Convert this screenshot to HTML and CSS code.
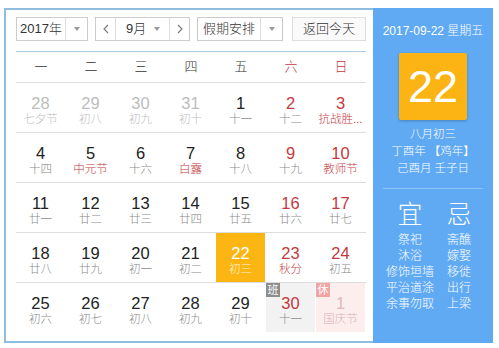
FILE: index.html
```html
<!DOCTYPE html>
<html lang="zh">
<head>
<meta charset="utf-8">
<link rel="stylesheet" href="styles.css">
</head>
<body>
<div class="cal">
  <div class="main">
    <div class="toolbar">
      <div class="sel sel-year"><span class="sel-text">2017年</span><span class="sel-arrow"><i class="tri"></i></span></div>
      <div class="sel sel-month">
        <span class="nav"><svg width="6" height="10" viewBox="0 0 6 10"><polyline points="5,1 1,5 5,9" fill="none" stroke="#777" stroke-width="1.1"/></svg></span>
        <span class="month-mid"><span class="month-text">9月</span><i class="tri"></i></span>
        <span class="nav nav-next"><svg width="6" height="10" viewBox="0 0 6 10"><polyline points="1,1 5,5 1,9" fill="none" stroke="#777" stroke-width="1.1"/></svg></span>
      </div>
      <div class="sel sel-holiday"><span class="sel-text">假期安排</span><span class="sel-arrow"><i class="tri"></i></span></div>
      <div class="btn-today">返回今天</div>
    </div>
    <div class="rule"></div>
    <div class="week">
      <span>一</span><span>二</span><span>三</span><span>四</span><span>五</span><span class="we">六</span><span class="we">日</span>
    </div>
    <div class="row">
      <div class="day other"><b>28</b><em>七夕节</em></div>
      <div class="day other"><b>29</b><em>初八</em></div>
      <div class="day other"><b>30</b><em>初九</em></div>
      <div class="day other"><b>31</b><em>初十</em></div>
      <div class="day"><b>1</b><em>十一</em></div>
      <div class="day wk"><b>2</b><em>十二</em></div>
      <div class="day wk fest"><b>3</b><em>抗战胜...</em></div>
    </div>
    <div class="row">
      <div class="day"><b>4</b><em>十四</em></div>
      <div class="day fest"><b>5</b><em>中元节</em></div>
      <div class="day"><b>6</b><em>十六</em></div>
      <div class="day fest"><b>7</b><em>白露</em></div>
      <div class="day"><b>8</b><em>十八</em></div>
      <div class="day wk"><b>9</b><em>十九</em></div>
      <div class="day wk fest"><b>10</b><em>教师节</em></div>
    </div>
    <div class="row">
      <div class="day"><b>11</b><em>廿一</em></div>
      <div class="day"><b>12</b><em>廿二</em></div>
      <div class="day"><b>13</b><em>廿三</em></div>
      <div class="day"><b>14</b><em>廿四</em></div>
      <div class="day"><b>15</b><em>廿五</em></div>
      <div class="day wk"><b>16</b><em>廿六</em></div>
      <div class="day wk"><b>17</b><em>廿七</em></div>
    </div>
    <div class="row">
      <div class="day"><b>18</b><em>廿八</em></div>
      <div class="day"><b>19</b><em>廿九</em></div>
      <div class="day"><b>20</b><em>初一</em></div>
      <div class="day"><b>21</b><em>初二</em></div>
      <div class="day today"><b>22</b><em>初三</em></div>
      <div class="day wk fest"><b>23</b><em>秋分</em></div>
      <div class="day wk"><b>24</b><em>初五</em></div>
    </div>
    <div class="row last">
      <div class="day"><b>25</b><em>初六</em></div>
      <div class="day"><b>26</b><em>初七</em></div>
      <div class="day"><b>27</b><em>初八</em></div>
      <div class="day"><b>28</b><em>初九</em></div>
      <div class="day"><b>29</b><em>初十</em></div>
      <div class="day wk work"><span class="badge badge-work">班</span><b>30</b><em>十一</em></div>
      <div class="day rest"><span class="badge badge-rest">休</span><b>1</b><em>国庆节</em></div>
    </div>
  </div>
  <div class="panel">
    <div class="p-date">2017-09-22 星期五</div>
    <div class="p-box">22</div>
    <div class="p-lines">
      <div>八月初三</div>
      <div>丁酉年 【鸡年】</div>
      <div>己酉月 壬子日</div>
    </div>
    <div class="p-rule"></div>
    <div class="yiji">
      <div class="yj-col yj-yi">
        <div class="yj-title">宜</div>
        <div>祭祀</div><div>沐浴</div><div>修饰垣墙</div><div>平治道涂</div><div>余事勿取</div>
      </div>
      <div class="yj-col yj-ji">
        <div class="yj-title">忌</div>
        <div>斋醮</div><div>嫁娶</div><div>移徙</div><div>出行</div><div>上梁</div>
      </div>
    </div>
  </div>
</div>
</body>
</html>
```
FILE: styles.css
```css
* { box-sizing: border-box; }
body {
  margin: 0;
  background: #fff;
  font-family: "Liberation Sans", "Noto Sans CJK SC", sans-serif;
  color: #333;
}
.cal {
  display: flex;
  margin: 8px 0 0 4px;
  width: 489px;
  height: 335px;
}
.main {
  width: 369px;
  border: 2px solid #8fbde0;
  border-right: none;
  padding: 7px 7px 0 10px;
}
.toolbar {
  display: flex;
  height: 24px;
}
.sel {
  display: flex;
  border: 1px solid #ccc;
  background: #fff;
  font-size: 13px;
  line-height: 22px;
  color: #333;
  font-weight: 300;
}
.sel-year { width: 72px; }
.sel-month { width: 95px; margin-left: 7px; }
.sel-holiday { width: 86px; margin-left: 7px; }
.sel-text { flex: 1; text-align: center; }
.sel-arrow {
  width: 22px;
  border-left: 1px solid #ddd;
  display: flex;
  align-items: center;
  justify-content: center;
}
.tri {
  display: block;
  width: 0;
  height: 0;
  border-left: 3px solid transparent;
  border-right: 3px solid transparent;
  border-top: 4px solid #999;
}
.nav {
  width: 20px;
  display: flex;
  align-items: center;
  justify-content: center;
  border-right: 1px solid #ddd;
}
.nav-next { border-right: none; border-left: 1px solid #ddd; }
.month-mid {
  flex: 1;
  display: flex;
  align-items: center;
  padding: 0 9px 0 10px;
  justify-content: space-between;
}
.btn-today {
  margin-left: auto;
  width: 74px;
  border: 1px solid #ddd;
  background: #fafafa;
  font-size: 13px;
  line-height: 22px;
  text-align: center;
  color: #333;
  font-weight: 300;
}
.rule {
  height: 1px;
  background: #aecde2;
  margin-top: 10px;
}
.week {
  display: grid;
  grid-template-columns: repeat(7, 50px);
  height: 31px;
  border-bottom: 1px solid #ddd;
  font-size: 13px;
  line-height: 30px;
  text-align: center;
  color: #333;
  font-weight: 300;
}
.week .we { color: #c4393e; }
.row {
  display: grid;
  grid-template-columns: repeat(7, 50px);
  height: 50px;
  border-bottom: 1px solid #ddd;
}
.row.last { border-bottom: none; height: 49px; }
.day {
  position: relative;
  display: flex;
  flex-direction: column;
  align-items: center;
  padding-top: 11px;
  margin-right: 1px;
}
.day b {
  font-weight: normal;
  font-size: 16.5px;
  line-height: 18px;
  color: #222;
}
.day em {
  font-style: normal;
  font-weight: 300;
  font-size: 11.5px;
  line-height: 14px;
  color: #8a8a8a;
  white-space: nowrap;
}
.day.other b, .day.other em { color: #bdbdbd; }
.day.wk b { color: #c4393e; }
.day.fest em { color: #c4393e; }
.day.today { background: #fbb614; }
.day.today b { color: #fff; }
.day.today em { color: #fff3d6; }
.day.work { background: #f2f2f2; }
.day.rest { background: #fdeeee; }
.day.rest b { color: #e0b8b8; }
.day.rest em { color: #dcb0b0; }
.badge {
  position: absolute;
  left: 0;
  top: 0;
  width: 14px;
  height: 14px;
  font-size: 11px;
  line-height: 14px;
  text-align: center;
  color: #fff;
}
.badge-work { background: #8d8d8d; }
.badge-rest { background: #f2a3a3; }
.panel {
  width: 120px;
  background: #60aaf4;
  color: #fff;
  padding-top: 15px;
  display: flex;
  flex-direction: column;
  align-items: center;
  font-weight: 300;
}
.p-date {
  font-size: 12px;
  line-height: 16px;
  white-space: nowrap;
}
.p-box {
  margin-top: 14px;
  width: 68px;
  height: 67px;
  background: #fbb413;
  border-radius: 2px;
  box-shadow: 0 1px 3px rgba(0, 0, 0, 0.25);
  font-size: 45px;
  font-weight: normal;
  line-height: 67px;
  text-align: center;
  color: #fff;
}
.p-lines {
  margin-top: 6px;
  font-size: 11.5px;
  line-height: 17px;
  text-align: center;
}
.p-rule {
  margin-top: 11px;
  width: 100px;
  height: 1px;
  background: #8cc4f8;
}
.yiji {
  align-self: stretch;
  display: flex;
  margin-top: 11px;
  padding-left: 13px;
  font-size: 12px;
  line-height: 16px;
}
.yj-col {
  display: flex;
  flex-direction: column;
  align-items: center;
}
.yj-yi { width: 48px; }
.yj-ji { width: 26px; margin-left: 12px; }
.yj-title {
  font-size: 25px;
  line-height: 28px;
  margin-bottom: 4px;
}
```
